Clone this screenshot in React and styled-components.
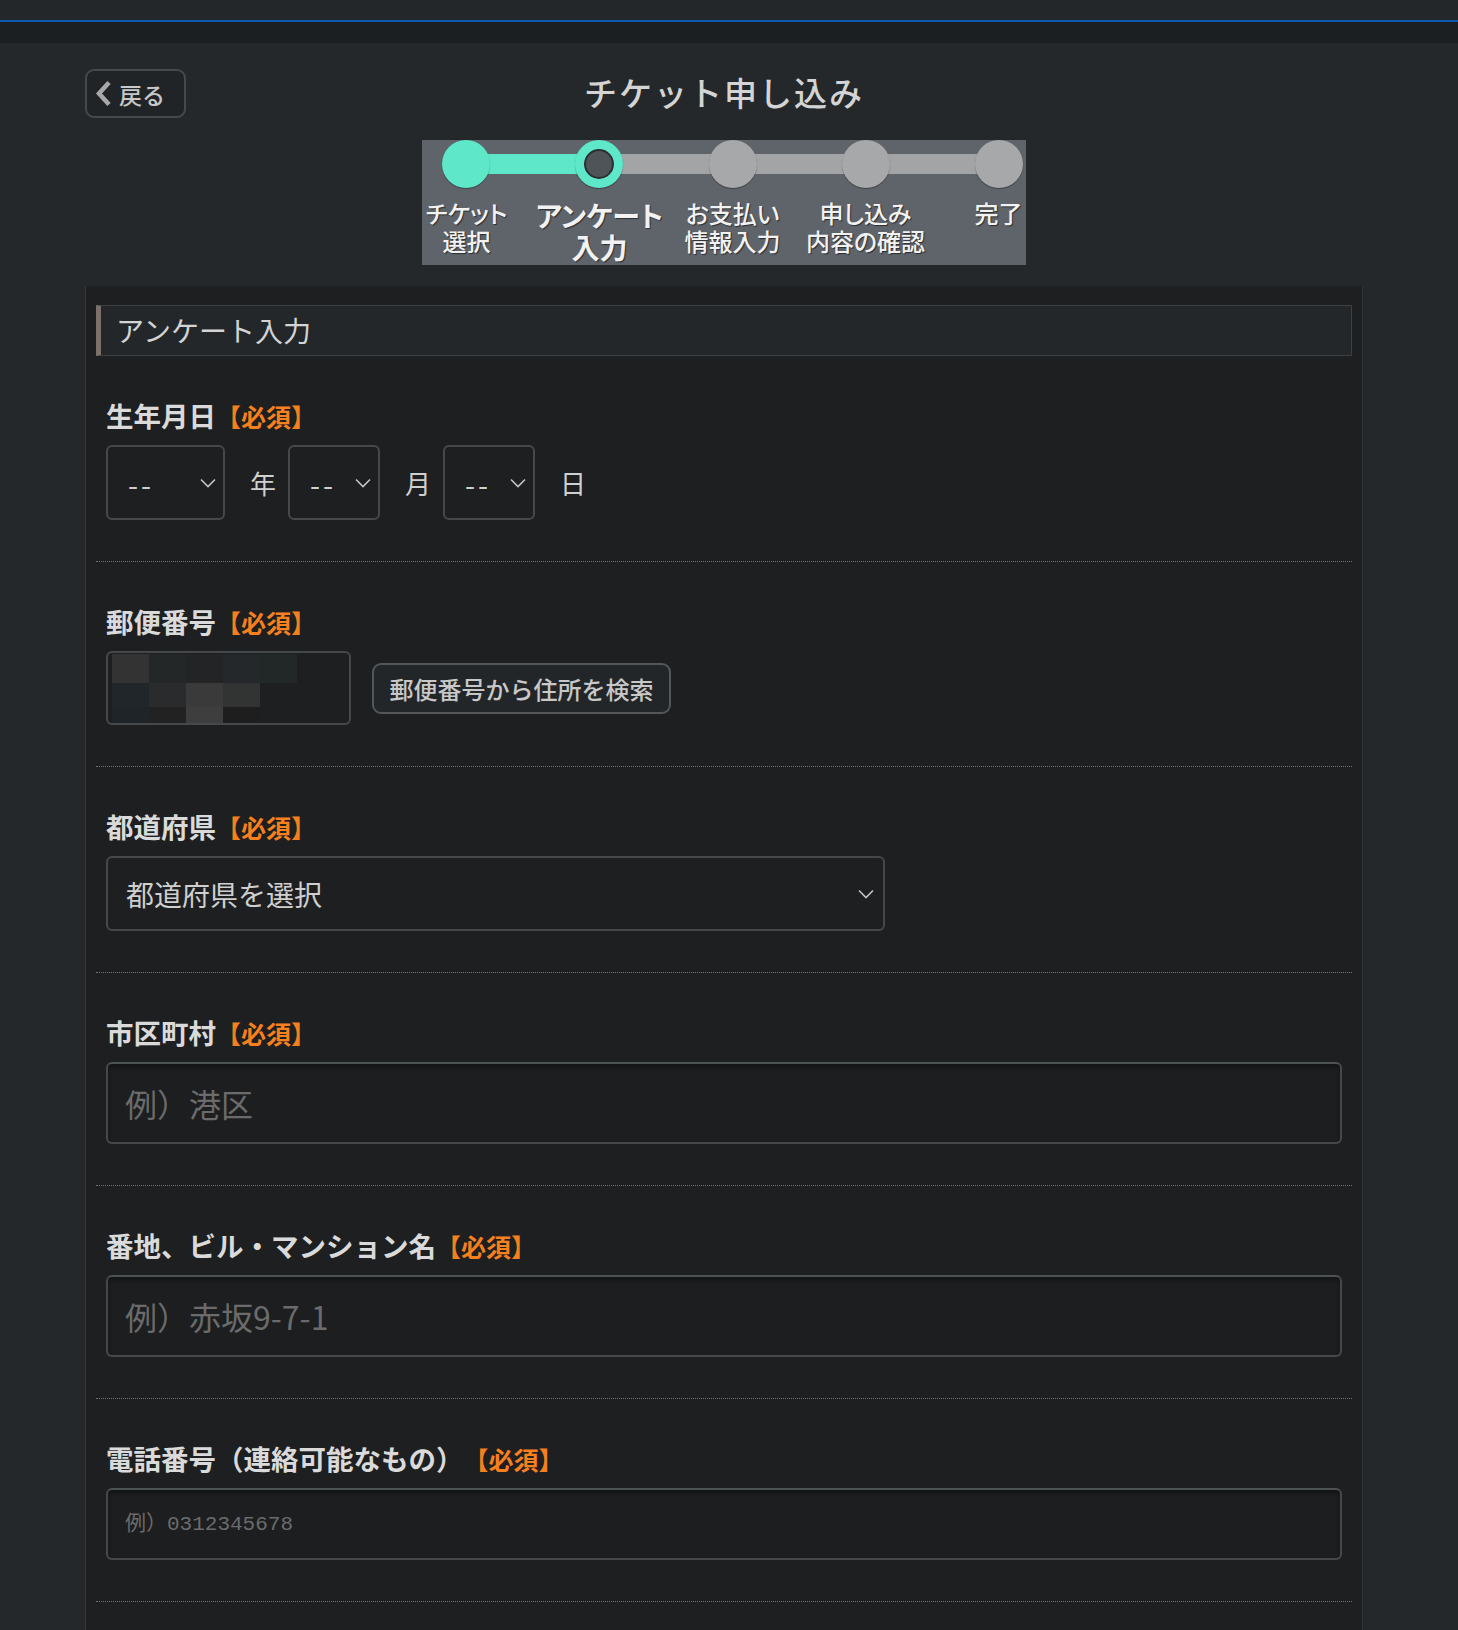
import styled, { createGlobalStyle, css } from 'styled-components';

const GlobalStyle = createGlobalStyle`
  body {
    margin: 0;
    background: #24282b;
    font-family: "Noto Sans CJK JP", "Noto Sans", sans-serif;
  }
`;

const steps = [
  { label: 'チケット\n選択', state: 'done' },
  { label: 'アンケート\n入力', state: 'current' },
  { label: 'お支払い\n情報入力', state: 'todo' },
  { label: '申し込み\n内容の確認', state: 'todo' },
  { label: '完了', state: 'todo' },
];

const mosaic = [
  '#333333', '#232728', '#222425', '#25282a', '#222728',
  '#20262a', '#2a2b2c', '#3a3a3a', '#323433', 'transparent',
  '#1f2428', '#222222', '#3e3e3e', '#1e1e1e', 'transparent',
];

function Chevron() {
  return (
    <svg width="16" height="10" viewBox="0 0 16 10">
      <polyline points="1,1.5 8,8.5 15,1.5" fill="none" stroke="#c4c4c4" strokeWidth="1.6" />
    </svg>
  );
}

function Required() {
  return <Req>【必須】</Req>;
}

export default function App() {
  return (
    <>
      <GlobalStyle />
      <TopBar />
      <SubBar />
      <Main>
        <Header>
          <BackButton>
            <svg width="19" height="27" viewBox="0 0 19 27">
              <polyline points="15,2.5 5,13.5 15,24.5" fill="none" stroke="#a8a8a8" strokeWidth="4.5" />
            </svg>
            戻る
          </BackButton>
          <Title>チケット申し込み</Title>
        </Header>

        <Stepper>
          <Track>
            {steps.map((s, i) => (
              <TrackPart key={s.label} $first={i === 0}>
                {i > 0 && <Bar $done={s.state !== 'todo'} />}
                <Dot $state={s.state} />
              </TrackPart>
            ))}
          </Track>
          <StepLabels>
            {steps.map((s) => (
              <StepLabel key={s.label} $active={s.state === 'current'}>
                {s.label}
              </StepLabel>
            ))}
          </StepLabels>
        </Stepper>

        <Panel>
          <SectionHeading>アンケート入力</SectionHeading>

          <Field>
            <Label>生年月日<Required /></Label>
            <Row>
              <SelectBox $width={119}>--<Chevron /></SelectBox>
              <Unit>年</Unit>
              <SelectBox $width={92}>--<Chevron /></SelectBox>
              <Unit>月</Unit>
              <SelectBox $width={92}>--<Chevron /></SelectBox>
              <Unit>日</Unit>
            </Row>
          </Field>

          <Field>
            <Label>郵便番号<Required /></Label>
            <Row $gap={21}>
              <PostalBox>
                <Mosaic>
                  {mosaic.map((c, i) => (
                    <Cell key={i} style={{ background: c }} />
                  ))}
                </Mosaic>
              </PostalBox>
              <SearchButton>郵便番号から住所を検索</SearchButton>
            </Row>
          </Field>

          <Field>
            <Label>都道府県<Required /></Label>
            <SelectBox $width={779} $wide>都道府県を選択<Chevron /></SelectBox>
          </Field>

          <Field>
            <Label>市区町村<Required /></Label>
            <TextInput placeholder="例）港区" />
          </Field>

          <Field>
            <Label>番地、ビル・マンション名<Required /></Label>
            <TextInput placeholder="例）赤坂9-7-1" />
          </Field>

          <Field>
            <Label>電話番号（連絡可能なもの）<Required /></Label>
            <TextInput $small placeholder="例）0312345678" />
          </Field>
        </Panel>
      </Main>
    </>
  );
}

const TopBar = styled.div`
  height: 20px;
  background: #23272a;
  border-bottom: 2px solid #0b5bb0;
`;

const SubBar = styled.div`
  height: 21px;
  background: #1c1f21;
`;

const Main = styled.main`
  width: 1278px;
  margin-left: 85px;
`;

const Header = styled.div`
  display: grid;
  grid-template-columns: 1fr auto 1fr;
  align-items: start;
  padding-top: 26px;
`;

const BackButton = styled.button`
  justify-self: start;
  display: flex;
  align-items: center;
  gap: 6px;
  width: 101px;
  height: 49px;
  box-sizing: border-box;
  padding: 0 0 0 7px;
  border: 2px solid #45494c;
  border-radius: 9px;
  background: #212426;
  color: #c8c8c8;
  font-family: inherit;
  font-size: 23px;
  font-weight: 500;
  cursor: pointer;
`;

const Title = styled.h1`
  margin: 0;
  font-size: 33px;
  font-weight: 500;
  letter-spacing: 2px;
  line-height: 46px;
  color: #d4d4d4;
`;

const Stepper = styled.div`
  width: 604px;
  height: 125px;
  margin: 22px auto 0;
  background: #5f646b;
`;

const Track = styled.div`
  display: flex;
  width: 581px;
  margin-left: 20px;
`;

const TrackPart = styled.div`
  display: flex;
  align-items: center;
  flex: ${(p) => (p.$first ? 'none' : 1)};
`;

const Bar = styled.div`
  flex: 1;
  height: 20px;
  margin: 0 -2px;
  background: ${(p) => (p.$done ? '#5ee8c9' : '#a2a4a6')};
`;

const Dot = styled.div`
  position: relative;
  width: 48px;
  height: 48px;
  box-sizing: border-box;
  border-radius: 50%;
  box-shadow: 0 1px 1px rgba(0, 0, 0, 0.35);
  ${(p) =>
    p.$state === 'done' &&
    css`
      background: #5ee8c9;
    `}
  ${(p) =>
    p.$state === 'current' &&
    css`
      background: #4f5458;
      border: 9px solid #5ee8c9;
      box-shadow: inset 0 0 0 2px #2b2f31, 0 1px 1px rgba(0, 0, 0, 0.35);
    `}
  ${(p) =>
    p.$state === 'todo' &&
    css`
      background: #a6a8aa;
    `}
`;

const StepLabels = styled.div`
  display: grid;
  grid-template-columns: repeat(5, 133px);
  justify-items: center;
  margin: 11px 0 0 -22px;
`;

const StepLabel = styled.div`
  width: max-content;
  text-align: center;
  white-space: pre;
  color: #f2f2f2;
  text-shadow: 1px 1px 1px rgba(0, 0, 0, 0.55);
  font-feature-settings: "palt";
  font-size: ${(p) => (p.$active ? '28px' : '24px')};
  font-weight: ${(p) => (p.$active ? 700 : 500)};
  line-height: ${(p) => (p.$active ? '32px' : '28px')};
`;

const Panel = styled.section`
  margin-top: 21px;
  padding: 19px 10px 60px;
  background: #1d1f21;
  border-left: 1px solid #33383b;
  border-right: 1px solid #2f3336;
`;

const SectionHeading = styled.h2`
  margin: 0;
  height: 51px;
  box-sizing: border-box;
  padding-left: 15px;
  background: #23272a;
  border: 1px solid #3c4043;
  border-left: 5px solid #7b716a;
  color: #d4d4d4;
  font-size: 28px;
  font-weight: 400;
  line-height: 49px;
`;

const Field = styled.div`
  padding: 41px 10px;
  border-bottom: 1px dotted #6f7376;
`;

const Label = styled.div`
  height: 37px;
  margin-bottom: 11px;
  color: #dadada;
  font-size: 27.5px;
  font-weight: 700;
  line-height: 37px;
  text-spacing-trim: space-all;
`;

const Req = styled.span`
  color: #f7801e;
  font-size: 25px;
  text-spacing-trim: space-all;
`;

const Row = styled.div`
  display: flex;
  align-items: center;
  gap: ${(p) => p.$gap || 0}px;
`;

const SelectBox = styled.div`
  display: flex;
  align-items: center;
  justify-content: space-between;
  width: ${(p) => p.$width}px;
  height: 75px;
  box-sizing: border-box;
  padding: 0 ${(p) => (p.$wide ? 9 : 7)}px 0 ${(p) => (p.$wide ? 18 : 20)}px;
  border: 2px solid #46494c;
  border-radius: 6px;
  background: #1d1f21;
  color: #cfcfcf;
  font-size: ${(p) => (p.$wide ? 28 : 29)}px;
  letter-spacing: ${(p) => (p.$wide ? 0 : 3)}px;
`;

const Unit = styled.span`
  margin: 0 12px 0 25px;
  color: #d0d0d0;
  font-size: 26px;
`;

const PostalBox = styled.div`
  width: 245px;
  height: 74px;
  box-sizing: border-box;
  padding: 1px 0 0 4px;
  border: 2px solid #46494c;
  border-radius: 6px;
  background: #1d1f21;
  overflow: hidden;
`;

const Mosaic = styled.div`
  display: grid;
  grid-template-columns: repeat(5, 37px);
  grid-template-rows: 29px 24px 16px;
`;

const Cell = styled.div``;

const SearchButton = styled.button`
  width: 299px;
  height: 51px;
  border: 2px solid #53575a;
  border-radius: 9px;
  background: #232628;
  color: #c8c8c8;
  font-family: inherit;
  font-size: 24px;
  font-weight: 500;
  cursor: pointer;
`;

const TextInput = styled.input`
  display: block;
  width: 100%;
  height: ${(p) => (p.$small ? 72 : 82)}px;
  box-sizing: border-box;
  padding: 0 17px;
  border: 2px solid #45494c;
  border-top-color: #4d5254;
  border-radius: 6px;
  background: #1c1e20;
  box-shadow: inset 0 3px 4px rgba(0, 0, 0, 0.35);
  color: #d0d0d0;
  font-family: ${(p) =>
    p.$small ? '"Liberation Mono", "Noto Sans CJK JP", monospace' : 'inherit'};
  font-size: ${(p) => (p.$small ? 21 : 32)}px;
  outline: none;

  &::placeholder {
    color: #6b6b6b;
  }
`;
